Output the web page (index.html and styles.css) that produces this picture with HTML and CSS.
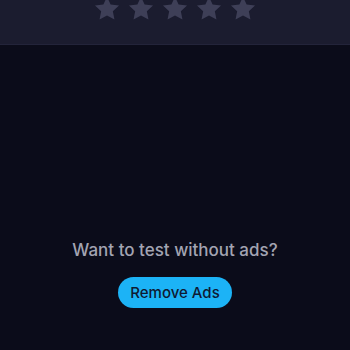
FILE: index.html
```html
<!DOCTYPE html>
<html>
<head>
<meta charset="utf-8">
<link rel="stylesheet" href="styles.css">
</head>
<body>
<div class="rating">
  <div class="stars">
    <svg class="star" viewBox="0 0 24 24"><path d="M12 1.5l3.1 6.6 7.2.9-5.3 5 1.4 7.1L12 17.6l-6.4 3.5 1.4-7.1-5.3-5 7.2-.9z"/></svg>
    <svg class="star" viewBox="0 0 24 24"><path d="M12 1.5l3.1 6.6 7.2.9-5.3 5 1.4 7.1L12 17.6l-6.4 3.5 1.4-7.1-5.3-5 7.2-.9z"/></svg>
    <svg class="star" viewBox="0 0 24 24"><path d="M12 1.5l3.1 6.6 7.2.9-5.3 5 1.4 7.1L12 17.6l-6.4 3.5 1.4-7.1-5.3-5 7.2-.9z"/></svg>
    <svg class="star" viewBox="0 0 24 24"><path d="M12 1.5l3.1 6.6 7.2.9-5.3 5 1.4 7.1L12 17.6l-6.4 3.5 1.4-7.1-5.3-5 7.2-.9z"/></svg>
    <svg class="star" viewBox="0 0 24 24"><path d="M12 1.5l3.1 6.6 7.2.9-5.3 5 1.4 7.1L12 17.6l-6.4 3.5 1.4-7.1-5.3-5 7.2-.9z"/></svg>
  </div>
</div>
<div class="promo">
  <p class="question">Want to test without ads?</p>
  <button class="remove">Remove Ads</button>
</div>
</body>
</html>
```

FILE: styles.css
```css
html, body {
  margin: 0;
  padding: 0;
}
body {
  width: 350px;
  height: 350px;
  overflow: hidden;
  background: #0b0c1a;
  font-family: "Inter", "Noto Sans", sans-serif;
}
.rating {
  height: 44px;
  background: #1b1c2f;
  border-bottom: 1px solid #23243a;
  overflow: hidden;
}
.stars {
  display: flex;
  justify-content: center;
  gap: 6px;
  margin-top: -5px;
}
.star {
  width: 28px;
  height: 28px;
  fill: #3e3f57;
}
.promo {
  display: flex;
  flex-direction: column;
  align-items: center;
  padding-top: 195px;
}
.question {
  margin: 0;
  font-size: 17px;
  font-weight: 500;
  color: #a3a4b2;
}
.remove {
  margin-top: 17px;
  height: 31px;
  padding: 0 12px;
  border: none;
  border-radius: 16px;
  background: #1cb3f6;
  color: #0e1a33;
  font-family: inherit;
  font-size: 15px;
  font-weight: 500;
}
```
